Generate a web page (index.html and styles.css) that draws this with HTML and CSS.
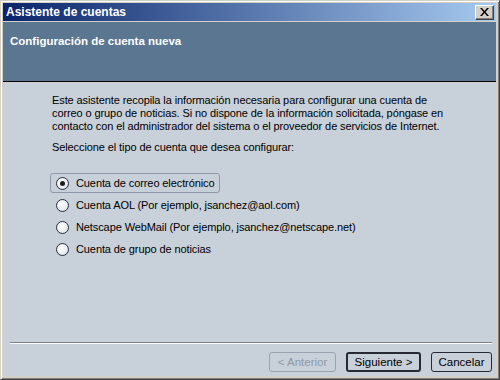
FILE: index.html
```html
<!DOCTYPE html>
<html lang="es">
<head>
  <meta charset="UTF-8" />
  <title>Asistente de cuentas</title>
  <link rel="stylesheet" href="styles.css">
</head>
<body>

<div class="window">
  <div class="titlebar">
    <span class="title">Asistente de cuentas</span>
    <button class="close" type="button">
      <svg width="9" height="8" viewBox="0 0 9 8"><path d="M0 0h2l2.5 3 2.5-3h2l-3.5 4 3.5 4h-2l-2.5-3-2.5 3h-2l3.5-4z" fill="#000"/></svg>
    </button>
  </div>

  <div class="header">
    <h1>Configuración de cuenta nueva</h1>
  </div>

  <div class="content">
    <p class="intro">Este asistente recopila la información necesaria para configurar una cuenta de<br>
      correo o grupo de noticias. Si no dispone de la información solicitada, póngase en<br>
      contacto con el administrador del sistema o el proveedor de servicios de Internet.</p>
    <p class="question">Seleccione el tipo de cuenta que desea configurar:</p>

    <div class="options">
      <label class="option focused"><span class="radio checked"></span>Cuenta de correo electrónico</label>
      <label class="option"><span class="radio"></span>Cuenta AOL (Por ejemplo, jsanchez@aol.com)</label>
      <label class="option"><span class="radio"></span>Netscape WebMail (Por ejemplo, jsanchez@netscape.net)</label>
      <label class="option"><span class="radio"></span>Cuenta de grupo de noticias</label>
    </div>
  </div>

  <div class="footer">
    <hr class="separator">
    <div class="buttons">
      <button class="btn back" type="button" disabled>&lt; Anterior</button>
      <button class="btn default" type="button">Siguiente &gt;</button>
      <button class="btn cancel" type="button">Cancelar</button>
    </div>
  </div>
</div>

</body>
</html>
```

FILE: styles.css
```css
html, body {
  margin: 0;
  padding: 0;
}
body {
  font-family: "Liberation Sans", Arial, sans-serif;
  font-size: 11px;
  color: #000;
  background: #d4d0c8;
}
.window {
  box-sizing: border-box;
  width: 500px;
  height: 380px;
  display: flex;
  flex-direction: column;
  background: #d4d0c8;
  border-top: 1px solid #d4d0c8;
  border-left: 1px solid #d4d0c8;
  border-right: 1px solid #404040;
  border-bottom: 1px solid #404040;
  box-shadow: inset 1px 1px #fff, inset -1px -1px #808080;
  padding: 2px 3px 3px 2px;
}
.titlebar {
  height: 18px;
  flex: none;
  display: flex;
  align-items: center;
  justify-content: space-between;
  padding: 0 2px 0 3px;
  background: linear-gradient(to right, #0a246a, #a6caf0);
}
.title {
  color: #fff;
  font-weight: bold;
  font-size: 12px;
}
.close {
  width: 19px;
  height: 15px;
  padding: 0;
  display: flex;
  align-items: center;
  justify-content: center;
  background: #d4d0c8;
  border: 1px solid;
  border-color: #fff #404040 #404040 #fff;
  box-shadow: inset -1px -1px #808080;
}
.header {
  flex: none;
  height: 59px;
  margin-top: 1px;
  background: #5b7691;
  border-bottom: 1px solid #000;
  padding: 0 0 0 7px;
}
.header h1 {
  margin: 13px 0 0;
  font-size: 11.5px;
  font-weight: bold;
  color: #fff;
}
.content {
  flex: 1;
  background: #c8d0da;
  padding: 12px 0 0 49px;
  letter-spacing: -0.1px;
}
.intro {
  margin: 0;
  line-height: 13px;
}
.question {
  margin: 8px 0 0;
  line-height: 13px;
}
.options {
  margin-top: 19px;
  display: flex;
  flex-direction: column;
  align-items: flex-start;
  gap: 2px;
}
.option {
  display: flex;
  align-items: center;
  height: 18px;
  padding: 0 5px 0 5px;
  border: 1px solid transparent;
  border-radius: 3px;
  margin-left: -2px;
}
.option.focused {
  border-color: #8d99a8;
}
.radio {
  box-sizing: border-box;
  width: 13px;
  height: 13px;
  border-radius: 50%;
  border: 1px solid #2a2f38;
  background: radial-gradient(circle at 40% 40%, #fff, #e6ecf2 60%, #c4ccd6);
  margin-right: 7px;
  display: flex;
  align-items: center;
  justify-content: center;
}
.radio.checked::after {
  content: "";
  width: 5px;
  height: 5px;
  border-radius: 50%;
  background: #1a1d22;
}
.footer {
  flex: none;
  background: #c8d0da;
  padding: 0 4px 0 7px;
  height: 34px;
}
.separator {
  margin: 0;
  border: none;
  border-top: 1px solid #7a838f;
  border-bottom: 1px solid #fff;
}
.buttons {
  display: flex;
  justify-content: flex-end;
  gap: 10px;
  margin-top: 8px;
}
.btn {
  box-sizing: border-box;
  font-family: "Liberation Sans", Arial, sans-serif;
  font-size: 11.5px;
  height: 20px;
  padding: 0;
  background: #c8d0da;
  border: 1px solid #262b33;
  border-radius: 3px;
  color: #000;
}
.btn.back {
  width: 67px;
}
.btn.default {
  width: 75px;
  border-width: 2px;
}
.btn.cancel {
  width: 61px;
}
.btn:disabled {
  color: #8f99a6;
  border-color: #9aa4b1;
}
```
